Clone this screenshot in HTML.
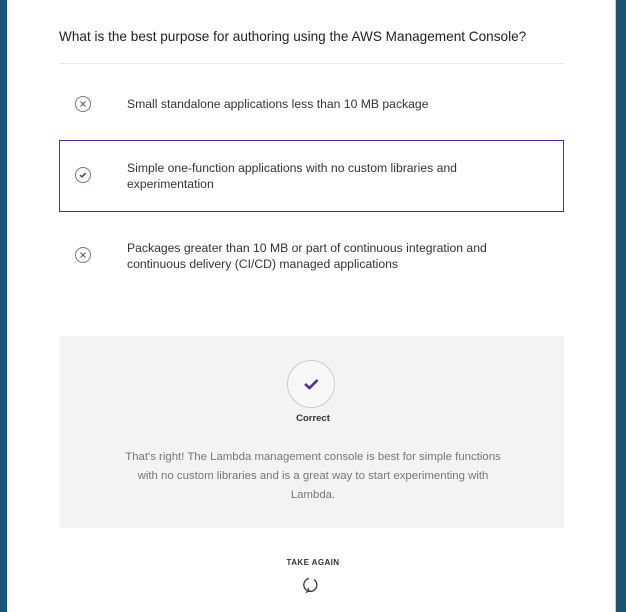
<!DOCTYPE html><html><head><style>
body{margin:0;width:626px;height:612px;background:#fff;position:relative;overflow:hidden;font-family:"Liberation Sans",sans-serif;color:#16191f}
.lb{position:absolute;left:0;top:0;width:7px;height:612px;background:#1b5477}
.rb{position:absolute;left:615px;top:0;width:11px;height:612px;background:#1b5477;border-left:1px solid #ccc}
.q{position:absolute;left:59px;top:29px;font-size:13.6px;color:#222}
.hr{position:absolute;left:59px;top:63px;width:505px;height:1px;background:#e6e6e6}
.t{position:absolute;left:127px;font-size:12.2px;line-height:16px;color:#333}
.ic{position:absolute;width:16px;height:16px;border:1px solid #777;border-radius:50%;box-sizing:border-box}
.box{position:absolute;left:59px;top:140px;width:505px;height:72px;border:1px solid #4c2ca3;box-sizing:border-box}
.panel{position:absolute;left:59px;top:336px;width:505px;height:192px;background:#f3f3f3}
.circ{position:absolute;left:287px;top:360px;width:48px;height:48px;border:1px solid #ccc;border-radius:50%;box-sizing:border-box;background:#f7f7f7}
.c{position:absolute;left:0;width:626px;text-align:center}
</style></head><body>
<div class="lb"></div><div class="rb"></div>
<div class="q">What is the best purpose for authoring using the AWS Management Console?</div>
<div class="hr"></div>
<div class="ic" style="left:75px;top:96px"><svg width="14" height="14" style="position:absolute;left:0;top:0"><path d="M4.5 4.5L9.5 9.5M9.5 4.5L4.5 9.5" stroke="#555" stroke-width="1"/></svg></div>
<div class="t" style="top:96px">Small standalone applications less than 10 MB package</div>
<div class="box"></div>
<div class="ic" style="left:75px;top:167px"><svg width="14" height="14" style="position:absolute;left:0;top:0"><path d="M4 7.2L6 8.8L9.8 5" stroke="#4c2ca3" stroke-width="1.5" fill="none"/></svg></div>
<div class="t" style="top:160px">Simple one-function applications with no custom libraries and<br>experimentation</div>
<div class="ic" style="left:75px;top:247px"><svg width="14" height="14" style="position:absolute;left:0;top:0"><path d="M4.5 4.5L9.5 9.5M9.5 4.5L4.5 9.5" stroke="#555" stroke-width="1"/></svg></div>
<div class="t" style="top:240px">Packages greater than 10 MB or part of continuous integration and<br>continuous delivery (CI/CD) managed applications</div>
<div class="panel"></div>
<div class="circ"><svg width="46" height="46" style="position:absolute;left:0;top:0"><path d="M17 23L21.5 27L29.5 19" stroke="#4c2ca3" stroke-width="2.6" fill="none"/></svg></div>
<div class="c" style="top:413px;font-size:9.5px;font-weight:bold;color:#333">Correct</div>
<div class="c" style="top:448px;font-size:11.4px;line-height:19px;color:#777">That's right! The Lambda management console is best for simple functions<br>with no custom libraries and is a great way to start experimenting with<br>Lambda.</div>
<div class="c" style="top:558px;font-size:8px;font-weight:bold;letter-spacing:.4px;color:#333">TAKE AGAIN</div>
<svg width="20" height="20" style="position:absolute;left:301px;top:575px"><path d="M8 3.5A6.5 6.5 0 1 0 13 4.5" stroke="#333" stroke-width="1.3" fill="none"/><path d="M5 17.5L8 16L7 13" stroke="#333" stroke-width="1.2" fill="none"/></svg>
</body></html>
